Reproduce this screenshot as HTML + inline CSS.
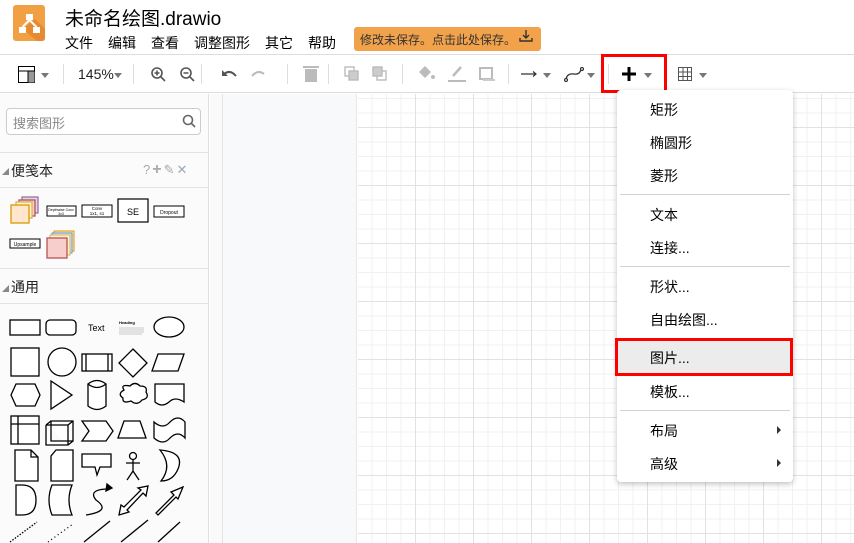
<!DOCTYPE html>
<html><head><meta charset="utf-8"><style>
*{margin:0;padding:0;box-sizing:border-box}
body{width:854px;height:543px;overflow:hidden;background:#fff;font-family:"Liberation Sans","Noto Sans CJK SC",sans-serif;color:#000;position:relative}
.a{position:absolute;white-space:nowrap}
.mi{position:absolute;left:650px;font-size:14px;color:#000;white-space:nowrap}
.sep{position:absolute;left:620px;width:170px;height:1px;background:#d3d3d3}
.tsep{position:absolute;top:64px;width:1px;height:20px;background:#ddd}
.car{position:absolute;width:0;height:0;border-left:4px solid transparent;border-right:4px solid transparent;border-top:5px solid #777}
</style></head><body>
<!-- header -->
<svg class="a" style="left:13px;top:5px" width="32" height="36" viewBox="0 0 32 36"><rect width="32" height="36" rx="3" fill="#f2a044"/><path d="M10 24 L24 36 L29 36 Q32 36 32 33 L32 24 L22 14 Z" fill="#e07b2a" opacity=".6"/><rect x="13" y="9" width="7" height="6" fill="#fff"/><rect x="6" y="22" width="7" height="6" fill="#fff"/><rect x="20" y="22" width="7" height="6" fill="#fff"/><path d="M16.5 15 L9.5 22 M16.5 15 L23.5 22" stroke="#fff" stroke-width="2"/></svg>
<div class="a" style="left:65px;top:4px;font-size:19px">未命名绘图.drawio</div>
<div class="a" style="left:65px;top:33px;font-size:14px;width:290px;height:20px">
<span class="a" style="left:0">文件</span><span class="a" style="left:43px">编辑</span><span class="a" style="left:86px">查看</span><span class="a" style="left:129px">调整图形</span><span class="a" style="left:200px">其它</span><span class="a" style="left:243px">帮助</span></div>
<div class="a" style="left:354px;top:27px;width:187px;height:24px;background:#f2a24b;border-radius:3px;font-size:12px;color:#333;padding:4px 0 0 6px">修改未保存。点击此处保存。<span style="position:absolute;left:165px;top:2px">
<svg width="14" height="14" viewBox="0 0 14 14"><path d="M7 1 V9 M4 6 L7 9 L10 6 M1 9 V12 H13 V9" stroke="#333" stroke-width="1.4" fill="none"/></svg></span></div>
<div class="a" style="left:0;top:54px;width:854px;height:1px;background:#ddd"></div>
<!-- toolbar -->
<div class="a" style="left:0;top:55px;width:854px;height:38px;background:#fff;border-bottom:1px solid #ddd"></div>
<svg class="a" style="left:18px;top:66px" width="17" height="17"><rect x=".5" y=".5" width="16" height="16" fill="#fff" stroke="#000"/><line x1="0" y1="5" x2="17" y2="5" stroke="#000"/><line x1="10" y1="5" x2="10" y2="17" stroke="#000"/><rect x="10.5" y="5.5" width="6" height="11" fill="#999"/></svg>
<div class="car" style="left:41px;top:73px"></div>
<div class="tsep" style="left:63px"></div>
<div class="a" style="left:78px;top:66px;font-size:14px;color:#222">145%</div>
<div class="car" style="left:114px;top:73px"></div>
<div class="tsep" style="left:133px"></div>
<svg class="a" style="left:150px;top:66px" width="60" height="17" fill="none" stroke="#555" stroke-width="1.6"><circle cx="7" cy="7" r="5"/><path d="M11 11 L15 15 M4.5 7 H9.5 M7 4.5 V9.5"/><circle cx="36" cy="7" r="5"/><path d="M40 11 L44 15 M33.5 7 H38.5"/></svg>
<div class="tsep" style="left:201px"></div>
<svg class="a" style="left:220px;top:66px" width="60" height="17" fill="none" stroke-width="2"><path d="M4 8 Q10 3 16 10" stroke="#555"/><path d="M2 4 V10 H8" fill="#555" stroke="none"/><path d="M44 8 Q38 3 32 10" stroke="#bbb"/></svg>
<div class="tsep" style="left:287px"></div>
<svg class="a" style="left:303px;top:65px" width="16" height="18"><rect x="2" y="4" width="12" height="13" fill="#bbb"/><rect x="0" y="1" width="16" height="2" fill="#bbb"/></svg>
<div class="tsep" style="left:328px"></div>
<svg class="a" style="left:344px;top:66px" width="50" height="17" fill="none" stroke="#bbb" stroke-width="1.4"><rect x="1" y="1" width="9" height="9"/><rect x="5" y="5" width="9" height="9" fill="#ccc"/><rect x="33" y="5" width="9" height="9"/><rect x="29" y="1" width="9" height="9" fill="#ccc"/></svg>
<div class="tsep" style="left:402px"></div>
<svg class="a" style="left:416px;top:64px" width="90" height="20"><path d="M3 8 L9 2 L15 8 L9 14Z" fill="#bbb"/><circle cx="17" cy="13" r="2" fill="#bbb"/><path d="M37 12 L45 3" stroke="#bbb" stroke-width="2.5"/><rect x="32" y="16" width="18" height="2" fill="#bbb"/><rect x="64" y="4" width="12" height="11" fill="none" stroke="#bbb" stroke-width="2"/><rect x="67" y="15" width="12" height="2" fill="#ccc"/></svg>
<div class="tsep" style="left:508px"></div>
<svg class="a" style="left:518px;top:67px" width="80" height="16" fill="none" stroke="#333" stroke-width="1.2"><path d="M3 7 H18 M15 4.5 L18 7 L15 9.5"/><path d="M48 14 Q48 6 56 7 Q62 8 63 2" stroke-width="1.3"/><circle cx="48" cy="13" r="1.5" fill="#fff"/><circle cx="64" cy="2" r="1.5" fill="#fff"/></svg>
<div class="car" style="left:543px;top:73px"></div>
<div class="car" style="left:587px;top:73px"></div>
<div class="tsep" style="left:608px"></div>
<svg class="a" style="left:622px;top:67px" width="14" height="14"><path d="M7 0 V14 M0 7 H14" stroke="#000" stroke-width="3"/></svg>
<div class="car" style="left:644px;top:73px"></div>
<div class="a" style="left:601px;top:54px;width:66px;height:39px;border:3px solid #f00"></div>
<svg class="a" style="left:678px;top:67px" width="14" height="14" fill="none" stroke="#555"><rect x=".5" y=".5" width="13" height="13"/><path d="M0.5 5 H13.5 M0.5 9.5 H13.5 M5 .5 V13.5 M9.5 .5 V13.5"/></svg>
<div class="car" style="left:699px;top:73px"></div>
<!-- sidebar -->
<div class="a" style="left:0;top:94px;width:209px;height:449px;background:#fbfbfb;border-right:1px solid #e0e0e0"></div>
<div class="a" style="left:6px;top:108px;width:195px;height:27px;border:1px solid #ccc;border-radius:4px;background:#fff;font-size:13px;color:#888;padding:4px 0 0 6px">搜索图形</div>
<svg class="a" style="left:182px;top:114px" width="14" height="14" fill="none" stroke="#666" stroke-width="1.6"><circle cx="6" cy="6" r="4.5"/><path d="M9.5 9.5 L13 13"/></svg>
<div class="a" style="left:0;top:152px;width:209px;height:1px;background:#e2e2e2"></div>
<div class="a" style="left:2px;top:167px;font-size:7px;color:#888">◢</div>
<div class="a" style="left:11px;top:161px;font-size:14px;color:#222">便笺本</div>
<div class="a" style="left:143px;top:161px;font-size:13px;color:#aaa;letter-spacing:2px">?<b style="font-size:16px">+</b>✎<span style="color:#9ab">✕</span></div>
<div class="a" style="left:0;top:187px;width:209px;height:1px;background:#e2e2e2"></div>
<svg class="a" style="left:0;top:188px" width="209" height="80" font-family="Liberation Sans" text-anchor="middle">
<rect x="22" y="9" width="16" height="16" fill="#e1d5e7" stroke="#9673a6" stroke-width="1.3"/><rect x="19" y="12" width="16" height="16" fill="#f8cecc" stroke="#b85450" stroke-width="1.3"/><rect x="16" y="14" width="16" height="16" fill="#fff2cc" stroke="#d6b656" stroke-width="1.3"/><rect x="11" y="17" width="18" height="18" fill="#ffe6cc" stroke="#d79b00" stroke-width="1.3"/>
<rect x="47" y="18" width="29" height="10" fill="#fff" stroke="#000"/><text x="61" y="23" font-size="3.5">Depthwise Conv</text><text x="61" y="27" font-size="3.5">3x3</text>
<rect x="82" y="17" width="30" height="12" fill="#fff" stroke="#000"/><text x="97" y="22" font-size="4.5">Conv</text><text x="97" y="27" font-size="4.5">1x1, s1</text>
<rect x="118" y="11" width="30" height="23" fill="#fff" stroke="#000" stroke-width="1.2"/><text x="133" y="27" font-size="9">SE</text>
<rect x="154" y="18" width="30" height="11" fill="#fff" stroke="#000"/><text x="169" y="26" font-size="5">Dropout</text>
<rect x="10" y="51" width="30" height="9" fill="#fff" stroke="#000"/><text x="25" y="58" font-size="5">Upsample</text>
<rect x="54" y="43" width="20" height="20" fill="#ffe6cc" stroke="#d79b00"/><rect x="52" y="45" width="20" height="20" fill="#dae8fc" stroke="#6c8ebf"/><rect x="50" y="47" width="20" height="20" fill="#fff2cc" stroke="#d6b656"/><rect x="47" y="50" width="20" height="20" fill="#f8cecc" stroke="#b85450" stroke-width="1.3"/>
</svg>
<div class="a" style="left:0;top:268px;width:209px;height:1px;background:#e2e2e2"></div>
<div class="a" style="left:2px;top:284px;font-size:7px;color:#888">◢</div>
<div class="a" style="left:11px;top:277px;font-size:14px;color:#222">通用</div>
<div class="a" style="left:0;top:303px;width:209px;height:1px;background:#e2e2e2"></div>
<svg class="a" style="left:0;top:304px" width="209" height="239" fill="#fff" stroke="#000" stroke-width="1.3" font-family="Liberation Sans">
<rect x="10" y="16" width="30" height="15"/><rect x="46" y="16" width="30" height="15" rx="4"/><text x="88" y="27" font-size="9" stroke="none" fill="#000">Text</text>
<text x="119" y="20" font-size="4" stroke="none" fill="#000" font-weight="bold">Heading</text><path d="M119 24 H144 M119 26 H144 M119 28 H144 M119 30 H142" fill="none" stroke="#999" stroke-width=".5"/>
<ellipse cx="169" cy="23" rx="15" ry="10"/>
<rect x="11" y="44" width="28" height="28"/><circle cx="62" cy="58" r="14"/><rect x="82" y="50" width="30" height="17"/><path d="M86 50 V67 M108 50 V67"/><path d="M133 45 L147 59 L133 73 L119 59Z"/><path d="M158 50 H184 L178 67 H152Z"/>
<path d="M11 91 L16 80 H35 L40 91 L35 102 H16Z"/><path d="M51 77 L72 91 L51 105Z"/><path d="M88 80 V102 Q97 109 106 102 V80 Q97 73 88 80 Q97 87 106 80"/><path d="M124 86 Q120 80 130 82 Q135 77 140 82 Q148 82 146 88 Q150 94 142 96 Q137 102 131 97 Q122 100 123 94 Q117 90 124 86Z"/><path d="M155 80 H184 V98 Q175 92 169 98 Q162 104 155 98Z"/>
<rect x="11" y="112" width="28" height="28"/><path d="M11 120 H39 M18 112 V140" fill="none"/><path d="M51 117 H73 V137 H51Z M46 121 L51 117 M46 121 V141 H68 L73 137 M46 121 H68 V141 M68 121 L73 117"/><path d="M82 117 H106 L113 127 L106 137 H82 L89 127Z"/><path d="M124 117 H140 L146 134 H118Z"/><path d="M154 118 Q163 126 170 118 Q178 110 185 118 V134 Q178 126 170 134 Q163 142 154 134Z"/>
<path d="M15 146 H31 L38 153 V177 H15Z M31 146 V153 H38"/><path d="M56 146 H73 V177 H51 V152Z"/><path d="M82 150 H111 V163 H100 L97 171 L95 163 H82Z"/><circle cx="133" cy="152" r="3.5"/><path d="M133 155 V167 M126 159 H140 M133 167 L127 176 M133 167 L139 176"/><path d="M160 146 Q185 148 178 165 Q173 177 161 177 Q173 162 160 146Z"/>
<path d="M16 181 H22 Q36 181 36 196 Q36 211 22 211 H16Z"/><path d="M52 181 H72 Q66 196 72 211 H52 Q46 196 52 181Z"/><path d="M86 211 Q112 207 96 196 Q88 186 106 185 L109 183" fill="none"/><path d="M107 180 L112 184 L106 187Z" fill="#000"/>
<path d="M119 211 L121 201 L124 203 L141 186 L138 184 L148 182 L146 192 L143 189 L127 206 L129 208Z"/><path d="M156 209 L159 206 L174 191 L171 188 L183 183 L178 195 L176 193 L161 208 L158 211Z"/>
<path d="M10 238 L37 218" stroke-dasharray="1.5 1.5"/><path d="M48 238 L73 220" stroke-dasharray="1 3"/><path d="M84 238 L110 217"/><path d="M121 238 L148 216"/><path d="M158 238 L180 218"/>
</svg>
<div class="a" style="left:213px;top:535px;font-size:7px;color:#555">||</div>
<!-- canvas -->
<div class="a" style="left:210px;top:94px;width:13px;height:449px;background:#fafafa;border-right:1px solid #e4e4e4"></div>
<div class="a" style="left:223px;top:94px;width:134px;height:449px;background:#f8f9fb;border-right:1px solid #e8e8e8"></div>
<div class="a" style="left:358px;top:94px;width:496px;height:449px;background-color:#fff;
background-image:linear-gradient(#e2e2e2 1px,transparent 1px),linear-gradient(90deg,#e2e2e2 1px,transparent 1px),linear-gradient(#f1f1f1 1px,transparent 1px),linear-gradient(90deg,#f1f1f1 1px,transparent 1px);
background-size:58px 58px,58px 58px,14.5px 14.5px,14.5px 14.5px;background-position:0 33px,57px 0,0 4px,13.5px 0"></div>
<!-- popup menu -->
<div class="a" style="left:617px;top:90px;width:176px;height:392px;background:#fff;border-radius:4px;box-shadow:0 2px 6px rgba(0,0,0,.25)"></div>
<div class="mi" style="top:100px">矩形</div>
<div class="mi" style="top:133px">椭圆形</div>
<div class="mi" style="top:166px">菱形</div>
<div class="sep" style="top:194px"></div>
<div class="mi" style="top:205px">文本</div>
<div class="mi" style="top:238px">连接...</div>
<div class="sep" style="top:266px"></div>
<div class="mi" style="top:277px">形状...</div>
<div class="mi" style="top:310px">自由绘图...</div>
<div class="a" style="left:615px;top:338px;width:178px;height:38px;background:#ececec;border:3px solid #f00"></div>
<div class="mi" style="top:348px">图片...</div>
<div class="mi" style="top:382px">模板...</div>
<div class="sep" style="top:410px"></div>
<div class="mi" style="top:421px">布局</div>
<div class="mi" style="top:454px">高级</div>
<div class="a" style="left:777px;top:426px;border-top:4px solid transparent;border-bottom:4px solid transparent;border-left:4px solid #333"></div>
<div class="a" style="left:777px;top:459px;border-top:4px solid transparent;border-bottom:4px solid transparent;border-left:4px solid #333"></div>
</body></html>
